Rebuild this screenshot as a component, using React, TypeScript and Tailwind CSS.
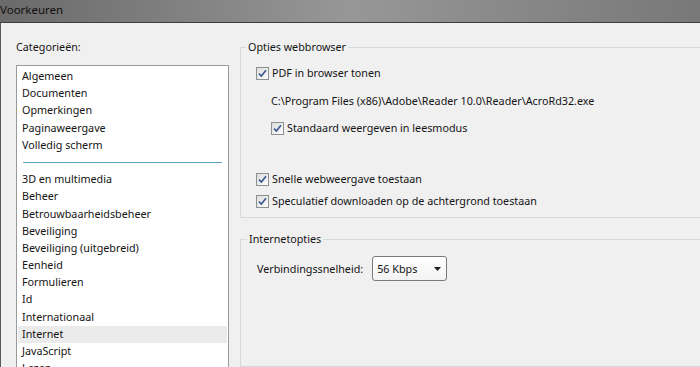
import { FC, ReactNode } from "react";

const font = { fontFamily: '"Segoe UI", "Noto Sans", sans-serif' };

const categoriesTop = ["Algemeen", "Documenten", "Opmerkingen", "Paginaweergave", "Volledig scherm"];
const categories = [
	"3D en multimedia",
	"Beheer",
	"Betrouwbaarheidsbeheer",
	"Beveiliging",
	"Beveiliging (uitgebreid)",
	"Eenheid",
	"Formulieren",
	"Id",
	"Internationaal",
	"Internet",
	"JavaScript",
	"Lezen",
];

const CheckBox: FC = () => (
	<span className="flex h-[13px] w-[13px] shrink-0 items-center justify-center border border-[#8e8f8f] bg-gradient-to-br from-[#dcdcdc] to-[#fdfdfd]">
		<svg width="9" height="9" viewBox="0 0 9 9">
			<path d="M1 4.6 L3.4 7 L8 1.2" fill="none" stroke="#3b5a8f" strokeWidth="1.7" />
		</svg>
	</span>
);

const CheckRow: FC<{ label: string; className?: string }> = ({ label, className }) => (
	<label className={`flex h-[16px] items-center gap-[3px] ${className ?? ""}`}>
		<CheckBox />
		<span>{label}</span>
	</label>
);

const Group: FC<{ title: string; className?: string; children: ReactNode }> = ({ title, className, children }) => (
	<fieldset className={`mr-[-20px] border border-[#d5dadd] ${className ?? ""}`}>
		<legend className="ml-[-10px] px-[2px] leading-[14px]">{title}</legend>
		{children}
	</fieldset>
);

const App: FC = () => {
	return (
		<div className="h-[367px] w-[700px] overflow-hidden bg-[#f0f0f0] text-[10.75px] leading-[16px] text-[#141414]" style={font}>
			<div className="flex h-[23px] items-center border-b border-[#3e3e3e] bg-gradient-to-r from-[#6a6a6a] via-[#979797] to-[#787878] pb-[2px] text-[11.5px] text-[#101010]">
				Voorkeuren
			</div>
			<div className="flex h-[344px] border-l border-[#5a5a5a]">
				<div className="flex w-[239px] shrink-0 flex-col pl-[15px] pt-[16px]">
					<div className="leading-[16px]">Categorieën:</div>
					<div className="mt-[10px] w-[213px] flex-1 border border-[#9a9a9a] bg-white px-px pt-[2px] leading-[17.2px]">
						{categoriesTop.map((c) => (
							<div key={c} className="h-[17.2px] px-[4px]">
								{c}
							</div>
						))}
						<div className="flex h-[17.2px] items-center px-[5px]">
							<div className="h-px w-full bg-[#5ea7c4]" />
						</div>
						{categories.map((c) => (
							<div key={c} className={`h-[17.2px] px-[4px] ${c === "Internet" ? "bg-[#ebebeb]" : ""}`}>
								{c}
							</div>
						))}
					</div>
				</div>
				<div className="flex min-w-0 flex-1 flex-col pt-[17px]">
					<Group title="Opties webbrowser" className="h-[178px] pl-[15px] pt-[11px]">
						<CheckRow label="PDF in browser tonen" />
						<div className="mt-[12px] pl-[15px]">C:\Program Files (x86)\Adobe\Reader 10.0\Reader\AcroRd32.exe</div>
						<CheckRow label="Standaard weergeven in leesmodus" className="mt-[11px] pl-[15px]" />
						<CheckRow label="Snelle webweergave toestaan" className="mt-[35px]" />
						<CheckRow label="Speculatief downloaden op de achtergrond toestaan" className="mt-[6px]" />
					</Group>
					<Group title="Internetopties" className="mt-[14px] flex-1 pl-[16px] pt-[10px]">
						<div className="flex items-center gap-[9px]">
							<span>Verbindingssnelheid:</span>
							<div className="flex h-[25px] w-[75px] items-center justify-between rounded-[3px] border border-[#7a7a7a] bg-gradient-to-b from-white to-[#f3f3f3] pl-[4px] pr-[5px]">
								<span>56 Kbps</span>
								<svg width="7" height="4" viewBox="0 0 7 4">
									<path d="M0 0 H7 L3.5 4 Z" fill="#1e1e1e" />
								</svg>
							</div>
						</div>
					</Group>
				</div>
			</div>
		</div>
	);
};

export default App;
